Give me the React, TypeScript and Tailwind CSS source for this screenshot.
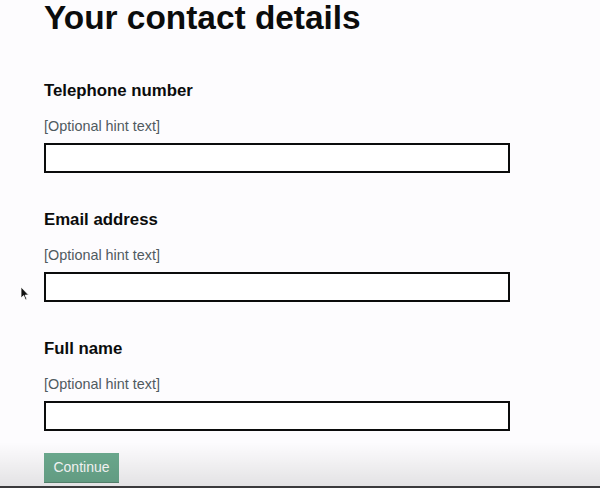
const FIELDS = ["Telephone number", "Email address", "Full name"];

const fontStack = "font-['Liberation_Sans',Arial,sans-serif]";

function CursorIcon() {
  return (
    <svg width="10" height="16" viewBox="0 0 10 16" className="absolute left-[20px] top-[286px]">
      <path d="M1 1 L1 12 L3.6 9.6 L5.6 14 L7 13.4 L5.1 9.1 L8.6 9.1 Z" fill="#111" stroke="#fff" strokeWidth="0.8" />
    </svg>
  );
}

export default function App() {
  return (
    <div className={`relative h-[488px] w-[600px] overflow-hidden bg-[#fdfcfe] text-[#0b0c0c] ${fontStack}`}>
      <div className="flex flex-col px-[44px]">
        <h1 className="mt-[1px] text-[33.4px] font-bold leading-[33px]">Your contact details</h1>
        <div className="mt-[47px] flex flex-col gap-[37px]">
          {FIELDS.map((label) => (
            <div key={label} className="flex flex-col">
              <label className="text-[16.8px] font-bold leading-[20px]">{label}</label>
              <p className="mt-[15px] text-[14.4px] leading-[20px] text-[#505a5f]">[Optional hint text]</p>
              <input type="text" className="mt-[7px] h-[30px] w-[466px] border-2 border-[#0b0c0c] bg-white" />
            </div>
          ))}
        </div>
        <button
          type="button"
          className="mt-[22px] h-[29px] w-[75px] bg-[#6cab8f] text-[14px] text-white shadow-[0_1px_0_#5a8a74]"
        >
          Continue
        </button>
      </div>
      <CursorIcon />
      <div className="pointer-events-none absolute inset-x-0 bottom-[2px] h-[44px] bg-gradient-to-b from-transparent to-[#0000001a]" />
      <div className="absolute inset-x-0 bottom-0 h-[2px] bg-[#3a3a3c]" />
    </div>
  );
}
